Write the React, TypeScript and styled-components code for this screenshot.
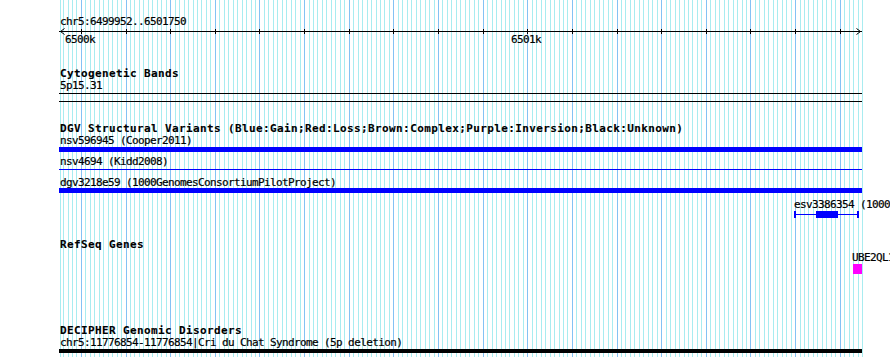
import React from "react";
import styled, { createGlobalStyle } from "styled-components";

const START = 6499952;
const END = 6501750;
const LEFT = 59;
const WIDTH = 803;
const PX_PER_BP = WIDTH / (END - START + 1);

const toX = (bp: number) => Math.ceil((bp - START) * PX_PER_BP);

const GlobalStyle = createGlobalStyle`
  html, body {
    margin: 0;
    padding: 0;
    background: #fff;
  }
`;

const Page = styled.div`
  position: relative;
  width: 890px;
  height: 357px;
  overflow: hidden;
  background: #fff;
`;

const GridLayer = styled.svg`
  position: absolute;
  left: 0;
  top: 0;
  shape-rendering: crispEdges;
`;

const Canvas = styled.div`
  position: relative;
  margin-left: ${LEFT}px;
  width: ${WIDTH}px;
`;

const Label = styled.div<{ $gap?: number; $lh?: number }>`
  margin-top: ${(p) => p.$gap ?? 0}px;
  padding-left: 1px;
  font-family: "DejaVu Sans Mono", "Liberation Mono", monospace;
  font-size: 11px;
  line-height: ${(p) => p.$lh ?? 13}px;
  letter-spacing: -0.62px;
  color: #000;
  -webkit-text-stroke: 0.2px #000;
  white-space: nowrap;
`;

const TrackTitle = styled(Label)`
  font-weight: bold;
  letter-spacing: 0.38px;
  -webkit-text-stroke: 0.1px #000;
`;

const Ruler = styled.div`
  position: relative;
  height: 20px;
`;

const RulerSvg = styled.svg`
  display: block;
  overflow: visible;
  shape-rendering: crispEdges;
`;

const ScaleLabel = styled.span<{ $x: number }>`
  position: absolute;
  top: 5px;
  left: ${(p) => p.$x - 16}px;
  font-family: "DejaVu Sans Mono", "Liberation Mono", monospace;
  font-size: 11px;
  line-height: 13px;
  letter-spacing: -0.62px;
  -webkit-text-stroke: 0.2px #000;
  white-space: nowrap;
`;

const BandOutline = styled.div<{ $gap?: number }>`
  margin-top: ${(p) => p.$gap ?? 0}px;
  height: 9px;
  box-sizing: border-box;
  border-top: 1px solid #000;
  border-bottom: 1px solid #000;
`;

const SolidBar = styled.div<{ $color: string; $h: number; $gap?: number }>`
  margin-top: ${(p) => p.$gap ?? 0}px;
  height: ${(p) => p.$h}px;
  background: ${(p) => p.$color};
`;

const Lane = styled.div<{ $h: number; $gap?: number }>`
  position: relative;
  margin-top: ${(p) => p.$gap ?? 0}px;
  height: ${(p) => p.$h}px;
`;

const LaneLabel = styled.span<{ $x: number }>`
  position: absolute;
  top: 0;
  left: ${(p) => p.$x}px;
  font-family: "DejaVu Sans Mono", "Liberation Mono", monospace;
  font-size: 11px;
  line-height: 13px;
  letter-spacing: -0.62px;
  -webkit-text-stroke: 0.2px #000;
  white-space: nowrap;
`;

const Segment = styled.div<{ $x: number; $w: number }>`
  position: absolute;
  top: 13px;
  left: ${(p) => p.$x}px;
  width: ${(p) => p.$w}px;
  height: 7px;
  box-sizing: border-box;
  border-left: 2px solid #0000ff;
  border-right: 2px solid #0000ff;

  &::before {
    content: "";
    position: absolute;
    left: 0;
    right: 0;
    top: 3px;
    height: 1px;
    background: #0000ff;
  }
`;

const SegmentCore = styled.div<{ $x: number; $w: number }>`
  position: absolute;
  top: 0;
  left: ${(p) => p.$x}px;
  width: ${(p) => p.$w}px;
  height: 7px;
  background: #0000ff;
`;

const GeneBox = styled.div<{ $x: number }>`
  position: absolute;
  top: 13px;
  left: ${(p) => p.$x}px;
  width: 9px;
  height: 10px;
  background: #ff00ff;
`;

function Grid() {
  const lines: { x: number; major: boolean }[] = [];
  for (let bp = Math.ceil(START / 10) * 10; bp <= END; bp += 10) {
    lines.push({ x: LEFT + toX(bp), major: bp % 100 === 0 });
  }
  return (
    <GridLayer width={890} height={357}>
      <rect x={LEFT + 1} y={0} width={1} height={357} fill="#a8ecf0" />
      {lines.map((l) => (
        <rect
          key={l.x}
          x={l.x}
          y={0}
          width={1}
          height={357}
          fill={l.major ? "#84c2f4" : "#a8ecf0"}
        />
      ))}
    </GridLayer>
  );
}

function ScaleBar() {
  const ticks: number[] = [];
  for (let bp = Math.ceil(START / 100) * 100; bp <= END; bp += 100) {
    ticks.push(toX(bp));
  }
  return (
    <Ruler>
      <RulerSvg width={WIDTH} height={8}>
        <rect x={0} y={3} width={WIDTH} height={1} fill="#000" />
        {ticks.map((x) => (
          <rect key={x} x={x} y={1} width={1} height={5} fill="#000" />
        ))}
        <path
          d="M5.5 0.5 L1.5 3.5 L5.5 6.5"
          stroke="#000"
          fill="none"
          shapeRendering="auto"
        />
        <path
          d={`M${WIDTH - 5.5} 0.5 L${WIDTH - 1.5} 3.5 L${WIDTH - 5.5} 6.5`}
          stroke="#000"
          fill="none"
          shapeRendering="auto"
        />
      </RulerSvg>
      <ScaleLabel $x={toX(6500000)}>6500k</ScaleLabel>
      <ScaleLabel $x={toX(6501000)}>6501k</ScaleLabel>
    </Ruler>
  );
}

export default function App() {
  return (
    <>
      <GlobalStyle />
      <Page>
        <Grid />
        <Canvas>
          <Label $gap={15}>chr5:6499952..6501750</Label>
          <ScaleBar />

          <TrackTitle $gap={20} $lh={12}>
            Cytogenetic Bands
          </TrackTitle>
          <Label $lh={12}>5p15.31</Label>
          <BandOutline $gap={1} />

          <TrackTitle $gap={21} $lh={12}>
            DGV Structural Variants (Blue:Gain;Red:Loss;Brown:Complex;Purple:Inversion;Black:Unknown)
          </TrackTitle>
          <Label $lh={12}>nsv596945 (Cooper2011)</Label>
          <SolidBar $color="#0000ff" $h={5} />
          <Label $gap={3}>nsv4694 (Kidd2008)</Label>
          <SolidBar $color="#0000ff" $h={1} $gap={1} />
          <Label $gap={7} $lh={11}>
            dgv3218e59 (1000GenomesConsortiumPilotProject)
          </Label>
          <SolidBar $color="#0000ff" $h={5} />
          <Lane $h={20} $gap={5}>
            <LaneLabel $x={735}>esv3386354 (1000GenomesConsortiumPilotProject)</LaneLabel>
            <Segment $x={735} $w={65}>
              <SegmentCore $x={20} $w={22} />
            </Segment>
          </Lane>

          <TrackTitle $gap={21} $lh={12}>
            RefSeq Genes
          </TrackTitle>
          <Lane $h={23}>
            <LaneLabel $x={793}>UBE2QL1</LaneLabel>
            <GeneBox $x={794} />
          </Lane>

          <TrackTitle $gap={51} $lh={12}>
            DECIPHER Genomic Disorders
          </TrackTitle>
          <Label $lh={12}>
            chr5:11776854-11776854|Cri du Chat Syndrome (5p deletion)
          </Label>
          <SolidBar $color="#000" $h={4} />
        </Canvas>
      </Page>
    </>
  );
}
